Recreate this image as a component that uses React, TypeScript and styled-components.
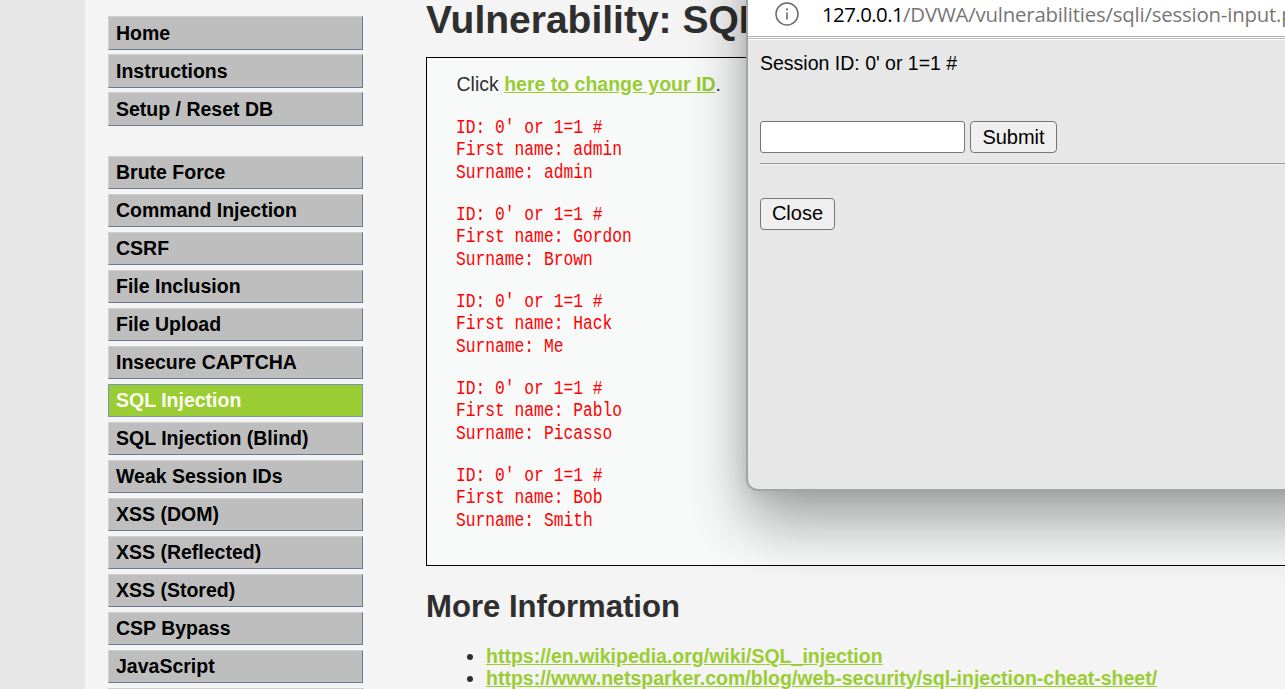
import React from 'react';
import styled, { createGlobalStyle } from 'styled-components';

const GlobalStyle = createGlobalStyle`
  html, body { margin: 0; height: 100%; overflow: hidden; }
  body {
    background: #e7e7e7;
    color: #2f2f2f;
    font: 19.5px/22px "Liberation Sans", Arial, sans-serif;
  }
  * { box-sizing: border-box; }
`;

const Page = styled.div`
  position: relative;
  display: flex;
  width: 1285px;
  height: 689px;
  padding-left: 85px;
  overflow: hidden;
`;

const Container = styled.div`
  display: flex;
  flex: 1;
  gap: 63px;
  padding-left: 23px;
  background: #f4f4f4;
`;

const Sidebar = styled.nav`
  flex: none;
  width: 255px;
  padding-top: 16px;
`;

const MenuGroup = styled.ul<{ $tall?: boolean }>`
  display: grid;
  grid-auto-rows: ${(p) => (p.$tall ? 34 : 33)}px;
  gap: ${(p) => (p.$tall ? 4 : 5)}px;
  margin: 0 0 30px;
  padding: 0;
  list-style: none;
  line-height: ${(p) => (p.$tall ? 32 : 30)}px;
`;

const MenuItem = styled.li<{ $active?: boolean }>`
  padding-left: 7px;
  border: 1px solid;
  border-color: ${(p) => (p.$active ? '#7a93b8' : '#d0d0d0 #6b7894 #6b7894 #d0d0d0')};
  background: ${(p) => (p.$active ? '#9acc33' : '#bebebe')};
  color: ${(p) => (p.$active ? '#fcfcf0' : '#000')};
  font-weight: bold;
  white-space: nowrap;
`;

const Main = styled.main`
  flex: none;
  width: 1000px;
`;

const Title = styled.h1`
  margin: 0;
  height: 57px;
  font-size: 39px;
  line-height: 39px;
  white-space: nowrap;
`;

const Panel = styled.section`
  height: 509px;
  padding: 15px 29px;
  border: 1px solid #000;
  background: #f8fafa;
`;

const Prompt = styled.p`
  margin: 0 0 22px 0.5px;
`;

const Link = styled.a`
  color: #9acc33;
  font-weight: bold;
  text-decoration: underline;
`;

const Record = styled.pre`
  width: max-content;
  height: 67px;
  margin: 0 0 20px;
  color: #f00;
  font: 19.5px/22.33px "Liberation Mono", monospace;
  transform: scaleX(0.8345);
  transform-origin: left top;
`;

const Heading = styled.h2`
  margin: 23px 0 0;
  font-size: 31.1px;
  line-height: 36px;
`;

const LinkList = styled.ul`
  margin: 20px 0 0;
  padding-left: 60px;
`;

const Popup = styled.aside`
  position: absolute;
  top: -60px;
  left: 746px;
  width: 760px;
  height: 551px;
  padding-top: 60px;
  border: 2px solid #a2a4a4;
  border-top: 0;
  border-radius: 12px;
  background: #e7e7e7;
  background-clip: padding-box;
  color: #000;
  box-shadow: 0 32px 60px rgba(0, 0, 0, 0.35), 0 2px 20px rgba(0, 0, 0, 0.1);
  overflow: hidden;
`;

const AddressBar = styled.header`
  display: flex;
  height: 40px;
  padding-left: 26px;
  gap: 22px;
  border-bottom: 4px solid transparent;
  background: linear-gradient(#b0b0b0, #b0b0b0) 0 36px / 100% 1px no-repeat,
    linear-gradient(#b8b8b8, #b8b8b8) 0 38px / 100% 1px no-repeat, #fff;
  background-origin: border-box;
  color: #767676;
  font: 20.4px/28px "Open Sans", "Noto Sans", sans-serif;
  white-space: nowrap;

  svg { flex: none; margin-top: 1px; }
`;

const Url = styled.span`
  letter-spacing: -0.2px;

  b {
    color: #000;
    font-weight: normal;
    letter-spacing: -0.55px;
  }
`;

const PopupBody = styled.div`
  padding: 12px 12px;
`;

const SessionForm = styled.form`
  display: flex;
  gap: 5px;
  margin-top: 47px;
`;

const Field = styled.input`
  width: 205px;
  height: 32px;
  border: 1px solid #767676;
  border-radius: 3px;
  background: #fff;
`;

const Button = styled.button<{ $width: number; $drop?: number }>`
  width: ${(p) => p.$width}px;
  height: 32px;
  padding: ${(p) => p.$drop ?? 0}px 0 ${(p) => 2 - (p.$drop ?? 0)}px;
  border: 1px solid #767676;
  border-radius: 4px;
  background: #efefef;
  color: #000;
  font: 20px/28px "Liberation Sans", Arial, sans-serif;
`;

const Rule = styled.hr`
  margin: 10px 0 33px;
  border: 0;
  border-top: 1px solid #9a9a9a;
  border-bottom: 1px solid #eee;
`;

const setupItems = ['Home', 'Instructions', 'Setup / Reset DB'];
const attackItems = [
  'Brute Force', 'Command Injection', 'CSRF', 'File Inclusion', 'File Upload',
  'Insecure CAPTCHA', 'SQL Injection', 'SQL Injection (Blind)', 'Weak Session IDs',
  'XSS (DOM)', 'XSS (Reflected)', 'XSS (Stored)', 'CSP Bypass', 'JavaScript', '',
];
const users = [
  ['admin', 'admin'], ['Gordon', 'Brown'], ['Hack', 'Me'], ['Pablo', 'Picasso'], ['Bob', 'Smith'],
];
const references = [
  'https://en.wikipedia.org/wiki/SQL_injection',
  'https://www.netsparker.com/blog/web-security/sql-injection-cheat-sheet/',
];

export default function App() {
  return (
    <Page>
      <GlobalStyle />
      <Container>
        <Sidebar>
          <MenuGroup $tall>
            {setupItems.map((item) => <MenuItem key={item}>{item}</MenuItem>)}
          </MenuGroup>
          <MenuGroup>
            {attackItems.map((item) => (
              <MenuItem key={item} $active={item === 'SQL Injection'}>{item}</MenuItem>
            ))}
          </MenuGroup>
        </Sidebar>
        <Main>
          <Title>Vulnerability: SQL Injection</Title>
          <Panel>
            <Prompt>Click <Link>here to change your ID</Link>.</Prompt>
            {users.map(([first, last]) => (
              <Record key={first}>{`ID: 0' or 1=1 #\nFirst name: ${first}\nSurname: ${last}`}</Record>
            ))}
          </Panel>
          <Heading>More Information</Heading>
          <LinkList>
            {references.map((url) => <li key={url}><Link>{url}</Link></li>)}
          </LinkList>
        </Main>
      </Container>
      <Popup>
        <AddressBar>
          <svg width="26" height="26" viewBox="0 0 26 26" fill="none" stroke="#6a6a6a">
            <circle cx="13" cy="13" r="11" strokeWidth="1.5" />
            <path d="M13 11.5V18.5" strokeWidth="1.6" />
            <circle cx="13" cy="8.3" r="1.1" fill="#6a6a6a" stroke="none" />
          </svg>
          <Url><b>127.0.0.1</b>/DVWA/vulnerabilities/sqli/session-input.php</Url>
        </AddressBar>
        <PopupBody>
          <div>Session ID: 0' or 1=1 #</div>
          <SessionForm>
            <Field />
            <Button type="button" $width={87} $drop={1}>Submit</Button>
          </SessionForm>
          <Rule />
          <Button type="button" $width={75}>Close</Button>
        </PopupBody>
      </Popup>
    </Page>
  );
}
